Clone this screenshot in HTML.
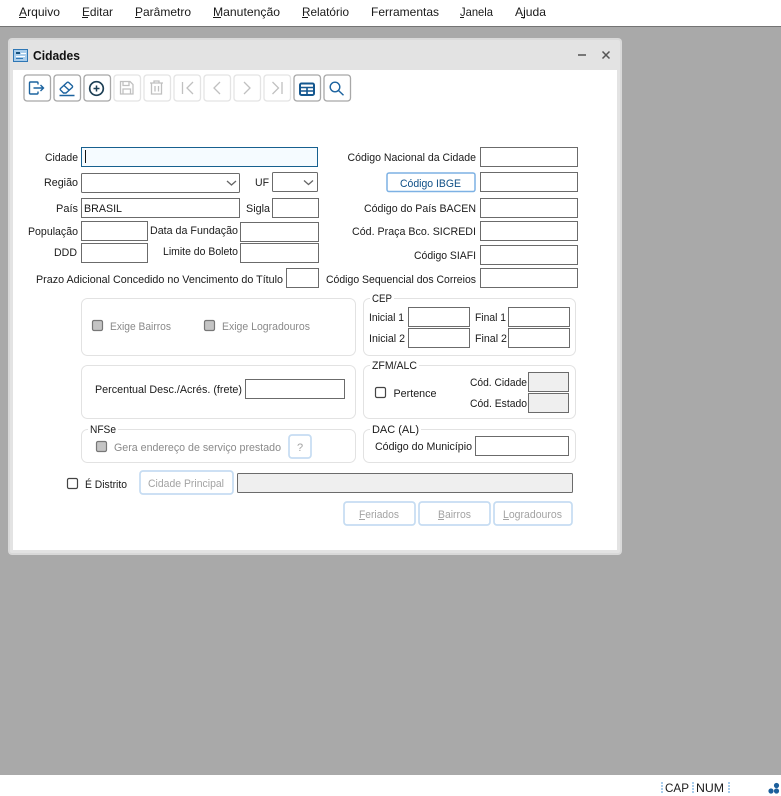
<!DOCTYPE html>
<html lang="pt-BR"><head><meta charset="utf-8"><title>Cidades</title>
<style>
html,body{margin:0;padding:0;width:781px;height:796px;overflow:hidden;background:#a9a9a9}
svg{position:absolute;left:0;top:0;display:block}
text{font-family:"Liberation Sans",sans-serif;font-size:12px;fill:#1a1a1a}
.f text{font-size:11px}
.i{fill:#fff;stroke:#6b6b6b;stroke-width:1}
.d{fill:#efefef;stroke:#6b6b6b;stroke-width:1}
.g{fill:#fff;stroke:#e2e2e2;stroke-width:1}
.b{fill:#fff;stroke:#c6dcf2;stroke-width:1.7}
.tb{fill:#fff;stroke:#a8a8a8;stroke-width:1.3}
.tbd{fill:#fff;stroke:#e4e4e4;stroke-width:1.3}
.c{fill:#c4c4c4;stroke:#777;stroke-width:1.2}
.f .gr{fill:#8a8a8a}
.f .lg{fill:#a3a3a3}
.ic{fill:none;stroke:#1c639f;stroke-width:1.4}
.icd{fill:none;stroke:#c0c0c0;stroke-width:1.3}
</style></head><body>
<svg width="781" height="796" viewBox="0 0 781 796" xmlns="http://www.w3.org/2000/svg">
<!-- menu -->
<rect x="0" y="0" width="781" height="26" fill="#fff"/>
<rect x="0" y="26" width="781" height="1" fill="#747474"/>
<g>
<text x="19" y="16" textLength="41" lengthAdjust="spacingAndGlyphs">Arquivo</text><rect x="19" y="17" width="7" height="1" fill="#1a1a1a"/>
<text x="82" y="16" textLength="31" lengthAdjust="spacingAndGlyphs">Editar</text><rect x="82" y="17" width="6" height="1" fill="#1a1a1a"/>
<text x="135" y="16" textLength="56" lengthAdjust="spacingAndGlyphs">Parâmetro</text><rect x="135" y="17" width="6" height="1" fill="#1a1a1a"/>
<text x="213" y="16" textLength="67" lengthAdjust="spacingAndGlyphs">Manutenção</text><rect x="213" y="17" width="8" height="1" fill="#1a1a1a"/>
<text x="302" y="16" textLength="47" lengthAdjust="spacingAndGlyphs">Relatório</text><rect x="302" y="17" width="6" height="1" fill="#1a1a1a"/>
<text x="371" y="16" textLength="68" lengthAdjust="spacingAndGlyphs">Ferramentas</text>
<text x="460" y="16" textLength="33" lengthAdjust="spacingAndGlyphs">Janela</text><rect x="460" y="17" width="4" height="1" fill="#1a1a1a"/>
<text x="515" y="16" textLength="31" lengthAdjust="spacingAndGlyphs">Ajuda</text><rect x="521" y="17" width="4" height="1" fill="#1a1a1a"/>
</g>
<!-- status -->
<rect x="0" y="775" width="781" height="21" fill="#fff"/>
<text x="665" y="792" textLength="24" lengthAdjust="spacingAndGlyphs">CAP</text>
<text x="696" y="792" textLength="28" lengthAdjust="spacingAndGlyphs">NUM</text>
<g fill="#a9cdec"><rect x="661" y="782" width="2" height="2"/><rect x="661" y="785" width="2" height="2"/><rect x="661" y="788" width="2" height="2"/><rect x="661" y="791" width="2" height="2"/>
<rect x="692" y="782" width="2" height="2"/><rect x="692" y="785" width="2" height="2"/><rect x="692" y="788" width="2" height="2"/><rect x="692" y="791" width="2" height="2"/>
<rect x="728" y="782" width="2" height="2"/><rect x="728" y="785" width="2" height="2"/><rect x="728" y="788" width="2" height="2"/><rect x="728" y="791" width="2" height="2"/></g>
<g fill="#1c5f9c"><circle cx="771" cy="791" r="2.6"/><circle cx="776.5" cy="785.5" r="2.6"/><circle cx="776.5" cy="791" r="2.6"/></g>
<!-- window -->
<rect x="8" y="38" width="614" height="517" rx="4" fill="#d9d9d9"/>
<rect x="10" y="40" width="610" height="513" rx="2" fill="#e3e3e3"/>
<rect x="13" y="70" width="604" height="480" fill="#fff"/>
<!-- title -->
<rect x="13.5" y="49.5" width="14" height="12" fill="#a9cdeb" stroke="#2f77b5"/>
<rect x="16" y="52" width="4" height="2" fill="#16527f"/><rect x="21" y="53" width="5" height="1" fill="#fff"/><rect x="16" y="56" width="9" height="1" fill="#fff"/><rect x="16" y="58" width="7" height="1" fill="#2f77b5"/>
<text x="33" y="60" textLength="47" lengthAdjust="spacingAndGlyphs" style="font-size:13px;font-weight:bold;fill:#111">Cidades</text>
<rect x="578" y="54" width="8" height="2" fill="#777"/>
<path d="M602.500 51.500l7 7M609.500 51.500l-7 7" stroke="#555" stroke-width="1.500" fill="none"/>
<!-- toolbar -->
<rect class="tb" x="24" y="75" width="26.500" height="26" rx="3"/>
<rect class="tb" x="54" y="75" width="26.500" height="26" rx="3"/>
<rect class="tb" x="84" y="75" width="26.500" height="26" rx="3"/>
<rect class="tbd" x="114" y="75" width="26.500" height="26" rx="3"/>
<rect class="tbd" x="144" y="75" width="26.500" height="26" rx="3"/>
<rect class="tbd" x="174" y="75" width="26.500" height="26" rx="3"/>
<rect class="tbd" x="204" y="75" width="26.500" height="26" rx="3"/>
<rect class="tbd" x="234" y="75" width="26.500" height="26" rx="3"/>
<rect class="tbd" x="264" y="75" width="26.500" height="26" rx="3"/>
<rect class="tb" x="294" y="75" width="26.500" height="26" rx="3"/>
<rect class="tb" x="324" y="75" width="26.500" height="26" rx="3"/>
<path class="ic" d="M38 84.500v-1.500a1 1 0 0 0-1-1h-6.500a1 1 0 0 0-1 1v10a1 1 0 0 0 1 1H37a1 1 0 0 0 1-1v-1.500M33.500 88H43.500M40.500 85l3 3-3 3"/>
<path class="ic" d="M60.500 88.500l6.500-6a1.200 1.200 0 0 1 1.700 0l3.500 3.300a1.200 1.200 0 0 1 0 1.700L66 93h-2.500l-3-3a1 1 0 0 1 0-1.500zM64 85.500l5.500 5M59.500 95.500h15"/>
<circle cx="96.500" cy="88.500" r="6.800" fill="none" stroke="#1d3f55" stroke-width="1.700"/>
<path d="M93.500 88.500h6M96.500 85.500v6" stroke="#1d3f55" stroke-width="1.500" fill="none"/>
<path class="icd" d="M120.500 81.500h9.500l3 3v9.500h-12.500zM123 82v3.500h6V82M123 94v-5h7.500v5"/>
<path class="icd" d="M150 83h13M154 83v-2h5v2M151.500 83v11h10V83M155 86v5.500M158.500 86v5.500"/>
<path class="icd" d="M182.500 82v12M193 82l-6 6 6 6"/>
<path class="icd" d="M220 82l-6 6 6 6"/>
<path class="icd" d="M244 82l6 6-6 6"/>
<path class="icd" d="M272.500 82l6 6-6 6M282 82v12"/>
<rect x="300" y="83.500" width="14" height="11.500" rx="1.500" fill="none" stroke="#14578f" stroke-width="2"/>
<path d="M300 87.500h14M300 91h14M307 87.500V95" stroke="#14578f" stroke-width="1.600" fill="none"/>
<circle cx="335" cy="87" r="4.800" class="ic"/>
<path class="ic" d="M338.500 90.500l5 4.800"/>
<!-- groups -->
<rect class="g" x="81.500" y="298.500" width="274" height="57" rx="6"/>
<rect class="g" x="81.500" y="365.500" width="274" height="53" rx="6"/>
<rect class="g" x="81.500" y="429.500" width="274" height="33" rx="6"/>
<rect class="g" x="363.500" y="298.500" width="212" height="57" rx="6"/>
<rect class="g" x="363.500" y="365.500" width="212" height="53" rx="6"/>
<rect class="g" x="363.500" y="429.500" width="212" height="33" rx="6"/>
<rect x="88" y="426" width="30" height="7" fill="#fff"/>
<rect x="370" y="295" width="24" height="7" fill="#fff"/>
<rect x="370" y="362" width="49" height="7" fill="#fff"/>
<rect x="370" y="426" width="51" height="7" fill="#fff"/>
<!-- inputs left -->
<rect x="81.500" y="147.500" width="236" height="19" fill="#f5fbff" stroke="#17608f"/>
<rect x="85" y="150" width="1" height="13" fill="#111"/>
<rect class="i" x="81.500" y="173.500" width="158" height="19" rx="1"/>
<rect class="i" x="272.500" y="172.500" width="45" height="19" rx="1"/>
<path d="M227 181l4.500 4 4.500-4M304 180.500l4.500 4 4.500-4" fill="none" stroke="#666" stroke-width="1.300"/>
<rect class="i" x="81.500" y="198.500" width="158" height="19"/>
<rect class="i" x="272.500" y="198.500" width="46" height="19"/>
<rect class="i" x="81.500" y="221.500" width="66" height="19"/>
<rect class="i" x="240.500" y="222.500" width="78" height="19"/>
<rect class="i" x="81.500" y="243.500" width="66" height="19"/>
<rect class="i" x="240.500" y="243.500" width="78" height="19"/>
<rect class="i" x="286.500" y="268.500" width="32" height="19"/>
<!-- inputs right -->
<rect class="i" x="480.500" y="147.500" width="97" height="19"/>
<rect class="i" x="480.500" y="172.500" width="97" height="19"/>
<rect class="i" x="480.500" y="198.500" width="97" height="19"/>
<rect class="i" x="480.500" y="221.500" width="97" height="19"/>
<rect class="i" x="480.500" y="245.500" width="97" height="19"/>
<rect class="i" x="480.500" y="268.500" width="97" height="19"/>
<rect x="387" y="173" width="88" height="18.500" rx="2" fill="#fff" stroke="#7db1e4" stroke-width="1.500"/>
<!-- group inputs -->
<rect class="i" x="245.500" y="379.500" width="99" height="19"/>
<rect class="i" x="408.500" y="307.500" width="61" height="19"/>
<rect class="i" x="508.500" y="307.500" width="61" height="19"/>
<rect class="i" x="408.500" y="328.500" width="61" height="19"/>
<rect class="i" x="508.500" y="328.500" width="61" height="19"/>
<rect class="d" x="528.500" y="372.500" width="40" height="19"/>
<rect class="d" x="528.500" y="393.500" width="40" height="19"/>
<rect class="i" x="475.500" y="436.500" width="93" height="19"/>
<rect class="d" x="237.500" y="473.500" width="335" height="19" rx="1"/>
<!-- checkboxes -->
<rect class="c" x="92.500" y="320.500" width="10" height="10" rx="1.500"/>
<rect class="c" x="204.500" y="320.500" width="10" height="10" rx="1.500"/>
<rect class="c" x="96.500" y="441.500" width="10" height="10" rx="1.500"/>
<rect x="375.500" y="387.500" width="10" height="10" rx="1.500" fill="#fff" stroke="#444" stroke-width="1.200"/>
<rect x="67.500" y="478.500" width="10" height="10" rx="1.500" fill="#fff" stroke="#444" stroke-width="1.200"/>
<!-- buttons -->
<rect class="b" x="289" y="435" width="22" height="23" rx="3"/>
<rect class="b" x="140" y="471" width="93" height="23" rx="3"/>
<rect class="b" x="344" y="502" width="71" height="23" rx="3"/>
<rect class="b" x="419" y="502" width="71" height="23" rx="3"/>
<rect class="b" x="494" y="502" width="78" height="23" rx="3"/>
<!-- labels -->
<g class="f">
<text x="45" y="161" textLength="33" lengthAdjust="spacingAndGlyphs">Cidade</text>
<text x="44" y="186" textLength="34" lengthAdjust="spacingAndGlyphs">Região</text>
<text x="255" y="186" textLength="14" lengthAdjust="spacingAndGlyphs">UF</text>
<text x="56" y="212" textLength="22" lengthAdjust="spacingAndGlyphs">País</text>
<text x="84" y="212" textLength="38" lengthAdjust="spacingAndGlyphs">BRASIL</text>
<text x="246" y="212" textLength="24" lengthAdjust="spacingAndGlyphs">Sigla</text>
<text x="28" y="235" textLength="50" lengthAdjust="spacingAndGlyphs">População</text>
<text x="150" y="234" textLength="88" lengthAdjust="spacingAndGlyphs">Data da Fundação</text>
<text x="54" y="256" textLength="23" lengthAdjust="spacingAndGlyphs">DDD</text>
<text x="163" y="255" textLength="75" lengthAdjust="spacingAndGlyphs">Limite do Boleto</text>
<text x="36" y="283" textLength="247" lengthAdjust="spacingAndGlyphs">Prazo Adicional Concedido no Vencimento do Título</text>
<text x="347.500" y="161" textLength="128.500" lengthAdjust="spacingAndGlyphs">Código Nacional da Cidade</text>
<text x="400" y="187" textLength="61" lengthAdjust="spacingAndGlyphs" style="fill:#0f4f86">Código IBGE</text>
<text x="364" y="212" textLength="112" lengthAdjust="spacingAndGlyphs">Código do País BACEN</text>
<text x="352" y="235" textLength="124" lengthAdjust="spacingAndGlyphs">Cód. Praça Bco. SICREDI</text>
<text x="414" y="259" textLength="62" lengthAdjust="spacingAndGlyphs">Código SIAFI</text>
<text x="326" y="283" textLength="150" lengthAdjust="spacingAndGlyphs">Código Sequencial dos Correios</text>
<text class="gr" x="110" y="330" textLength="61" lengthAdjust="spacingAndGlyphs">Exige Bairros</text>
<text class="gr" x="222" y="330" textLength="88" lengthAdjust="spacingAndGlyphs">Exige Logradouros</text>
<text x="95" y="393" textLength="147" lengthAdjust="spacingAndGlyphs">Percentual Desc./Acrés. (frete)</text>
<text x="90" y="433" textLength="26" lengthAdjust="spacingAndGlyphs">NFSe</text>
<text class="gr" x="114" y="451" textLength="167" lengthAdjust="spacingAndGlyphs">Gera endereço de serviço prestado</text>
<text class="lg" x="297" y="451">?</text>
<text x="372" y="302" textLength="20" lengthAdjust="spacingAndGlyphs">CEP</text>
<text x="369" y="321" textLength="35" lengthAdjust="spacingAndGlyphs">Inicial 1</text>
<text x="475" y="321" textLength="31" lengthAdjust="spacingAndGlyphs">Final 1</text>
<text x="369" y="342" textLength="36" lengthAdjust="spacingAndGlyphs">Inicial 2</text>
<text x="475" y="342" textLength="32" lengthAdjust="spacingAndGlyphs">Final 2</text>
<text x="372" y="369" textLength="45" lengthAdjust="spacingAndGlyphs">ZFM/ALC</text>
<text x="393.500" y="397" textLength="43" lengthAdjust="spacingAndGlyphs">Pertence</text>
<text x="470" y="386" textLength="57" lengthAdjust="spacingAndGlyphs">Cód. Cidade</text>
<text x="470" y="407" textLength="57" lengthAdjust="spacingAndGlyphs">Cód. Estado</text>
<text x="372" y="433" textLength="47" lengthAdjust="spacingAndGlyphs">DAC (AL)</text>
<text x="375" y="450" textLength="97" lengthAdjust="spacingAndGlyphs">Código do Município</text>
<text x="85" y="488" textLength="42" lengthAdjust="spacingAndGlyphs">É Distrito</text>
<text class="lg" x="148" y="487" textLength="76" lengthAdjust="spacingAndGlyphs">Cidade Principal</text>
<text class="lg" x="359" y="518" textLength="40" lengthAdjust="spacingAndGlyphs">Feriados</text><rect x="359" y="519" width="6" height="1" fill="#a3a3a3"/>
<text class="lg" x="438" y="518" textLength="33" lengthAdjust="spacingAndGlyphs">Bairros</text><rect x="438" y="519" width="6" height="1" fill="#a3a3a3"/>
<text class="lg" x="503" y="518" textLength="59" lengthAdjust="spacingAndGlyphs">Logradouros</text><rect x="503" y="519" width="6" height="1" fill="#a3a3a3"/>
</g>
</svg>
</body></html>
